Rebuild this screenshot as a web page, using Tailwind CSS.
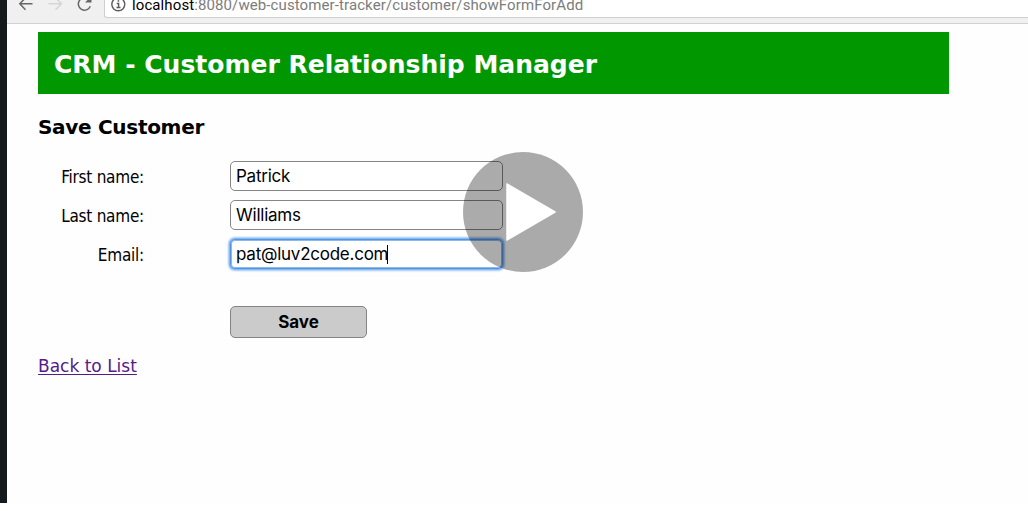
<!DOCTYPE html>
<html lang="en">
<head>
<meta charset="utf-8">
<title>Save Customer</title>
<script src="https://cdn.jsdelivr.net/npm/@tailwindcss/browser@4"></script>
</head>
<body class="bg-white">
<div class="relative flex h-[511px] w-[1028px] overflow-hidden">
  <div class="h-[503px] w-[7px] shrink-0 bg-[#14191e]"></div>
  <div class="flex h-[503px] grow flex-col bg-[#fefefe]">
    <header class="flex h-6 shrink-0 border-b border-[#d2d2d2] bg-[#f0f0f0]">
      <svg class="h-[18px] w-[97px] shrink-0" viewBox="7 0 97 18" fill="none" stroke-width="1.5">
        <path d="M32.500 3.800H20M25.500 -2.200L19.800 3.800L25.500 9.800" stroke="#666"/>
        <path d="M48.500 3.800H61.500M55.500 -2.200L61.500 3.800L55.500 9.800" stroke="#d5d5d5"/>
        <path d="M90.300 6.300A6.200 6.200 0 1 1 89 -0.300" stroke="#666"/>
        <path d="M91.500 -4V2.500H85Z" fill="#666"/>
      </svg>
      <div class="flex h-[18px] grow rounded-bl-[3px] border-b border-l border-[#cfcfcf] bg-white">
        <svg class="ml-[6px] h-[18px] w-[15px] shrink-0" viewBox="0 0 15 18" fill="none" stroke="#5c5c5c" stroke-width="1.4">
          <circle cx="7.300" cy="4.300" r="6.500"/>
          <path d="M5.700 3.500H7.600V7.500M5.500 7.500H9.500"/><path d="M6.700 1H8.200" stroke-width="1.600"/>
        </svg>
        <p class="-mt-[4px] ml-[6px] font-['Roboto'] text-[15px] leading-[18px] tracking-[0.1px] whitespace-nowrap text-[#7c7c7c]"><span class="text-black">localhost</span>:8080/web-customer-tracker/customer/showFormForAdd</p>
      </div>
    </header>
    <main class="flex flex-col items-start pt-[8px] pl-8 -ml-px text-black">
      <div class="mb-[21px] flex h-[62px] w-[911px] items-center bg-[#009700] pl-4">
        <h1 class="pt-[3px] font-['DejaVu_Sans'] text-[25px] leading-[30px] font-bold whitespace-nowrap text-white">CRM - Customer Relationship Manager</h1>
      </div>
      <h2 class="font-['DejaVu_Sans'] text-[20px] leading-6 font-bold tracking-[-0.3px] whitespace-nowrap">Save Customer</h2>
      <form class="mt-[22px] grid grid-cols-[106px_273px] gap-x-[86px] gap-y-[9px] font-['Inter'] text-[17px] tracking-[-0.24px]">
        <label class="flex h-[30px] items-center justify-end pt-[2px] font-['DejaVu_Sans_Condensed','DejaVu_Sans'] text-[17px] leading-[28px] whitespace-nowrap">First name:</label>
        <div class="flex h-[30px] items-center rounded-[5px] border border-[#858585] bg-white px-[5px] pt-px">Patrick</div>
        <label class="flex h-[30px] items-center justify-end pt-[2px] font-['DejaVu_Sans_Condensed','DejaVu_Sans'] text-[17px] leading-[28px] whitespace-nowrap">Last name:</label>
        <div class="flex h-[30px] items-center rounded-[5px] border border-[#858585] bg-white px-[5px] pt-px">Williams</div>
        <label class="flex h-[30px] items-center justify-end pt-px font-['DejaVu_Sans_Condensed','DejaVu_Sans'] text-[17px] leading-[28px] whitespace-nowrap">Email:</label>
        <div class="flex h-[30px] items-center rounded-[5px] border border-[#5794df] bg-white px-[5px] pt-px shadow-[0_0_1px_1px_#80b7f6,0_0_2px_2px_#a5cdfa,inset_0_0_0_1px_#8bb9ee]">pat@luv2code.com<span class="-ml-px h-[19px] w-px bg-black"></span></div>
      </form>
      <button class="mt-[37px] ml-[192px] h-8 w-[137px] rounded-[5px] border border-[#858585] bg-[#cbcbcb] pt-[2px] font-['Inter'] text-[17px] font-bold">Save</button>
      <a class="mt-[16px] font-['DejaVu_Sans'] text-[17px] leading-6 whitespace-nowrap text-[#551a8b] underline underline-offset-2">Back to List</a>
    </main>
  </div>
  <svg class="absolute top-[152px] left-[463px] size-[120px]" viewBox="0 0 120 120">
    <circle cx="60" cy="60" r="60" fill="#000" fill-opacity=".33"/>
    <path d="M44 32L92 60L44 88Z" fill="#fff" stroke="#fff" stroke-width="1.500" stroke-linejoin="round"/>
  </svg>
</div>
</body>
</html>
